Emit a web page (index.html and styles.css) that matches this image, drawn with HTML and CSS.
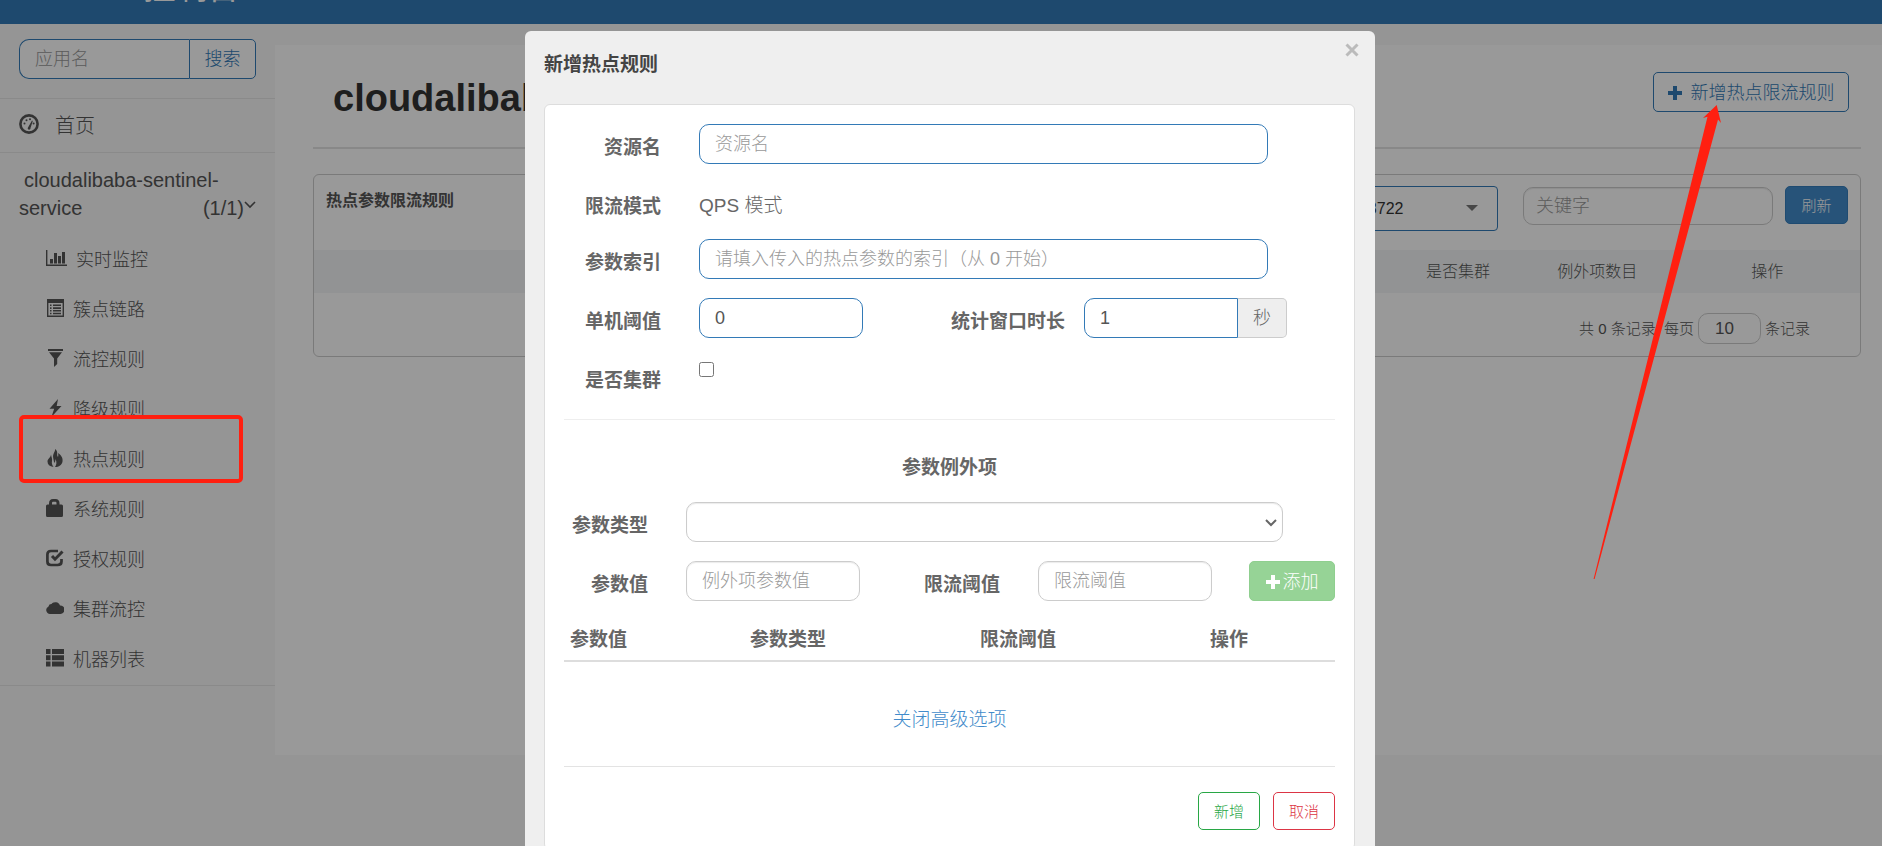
FILE: index.html
```html
<!DOCTYPE html>
<html lang="zh-CN">
<head>
<meta charset="utf-8">
<title>Sentinel 控制台</title>
<link rel="stylesheet" href="styles.css">
</head>
<body>
<header class="topbar"><a class="brand" href="#">Sentinel 控制台</a></header>
<div class="layout">
  <nav class="sidebar">
    <form class="search">
      <input class="search-input" type="text" placeholder="应用名" aria-label="应用名">
      <button class="search-btn" type="button">搜索</button>
    </form>
    <a class="home" href="#">
      <svg class="home-icon" viewBox="0 0 20 20"><circle cx="10" cy="10" r="8.6" fill="none" stroke="currentColor" stroke-width="2.6"/><path d="M9 13.5 13 6.5l.8.4-2.3 7.2a1.4 1.4 0 1 1-2.5-.6z" fill="currentColor"/><circle cx="5.5" cy="9.5" r="1" fill="currentColor"/><circle cx="7.5" cy="6.3" r="1" fill="currentColor"/><circle cx="11" cy="5.2" r="1" fill="currentColor"/><circle cx="14.6" cy="9.5" r="1" fill="currentColor"/></svg>
      <span>首页</span>
    </a>
    <a class="app" href="#">cloudalibaba-sentinel-service
      <span class="app-count">(1/1)<svg class="app-caret" viewBox="0 0 12 8"><path d="M1 1l5 5 5-5" fill="none" stroke="currentColor" stroke-width="1.6"/></svg></span>
    </a>
    <ul class="menu">
      <li><a href="#"><svg class="mi wide" viewBox="0 0 21 18"><path d="M0 1h1.4v14.6H21V17H0zM4 10h3v4.500H4zM8 4h3v10.500H8zM12 7h3v7.500h-3zM16 3h3v11.500h-3z" fill="currentColor"/></svg>实时监控</a></li>
      <li><a href="#"><svg class="mi" viewBox="0 0 18 18"><path d="M1 0h17v18H1zM2.400 4v12.600h14.200V4z" fill="currentColor" fill-rule="evenodd"/><path d="M4 5.500h1.500v1.600H4zm3 0h8v1.600H7zM4 8.300h1.500v1.600H4zm3 0h8v1.600H7zM4 11h1.500v1.600H4zm3 0h8v1.600H7zM4 13.700h1.500v1.600H4zm3 0h8v1.600H7z" fill="currentColor"/></svg>簇点链路</a></li>
      <li><a href="#"><svg class="mi" viewBox="0 0 18 18"><path d="M2 0h15v2H2zM3 3.200h13l-4.800 6.300V15L8 18V9.500z" fill="currentColor"/></svg>流控规则</a></li>
      <li><a href="#"><svg class="mi" viewBox="0 0 18 18"><path d="M12 0 3.500 9.800h4.700L5.400 18 15.500 7h-4.800z" fill="currentColor"/></svg>降级规则</a></li>
      <li><a href="#"><svg class="mi" viewBox="-1 0 18 18"><path d="M8 0C12 3 9 5.500 11 8 11.500 6.500 11.300 5 11 4 15 6.500 16 10 15.500 12.500 15 16 12 18 8 18 9.500 16 10 13 8.500 10 8.500 12 8 13 7.200 14 6.500 9 5.500 8 6.500 5 7 3 8.500 2 8 0zM4 5.500C4.300 8 5.500 9.500 5 12 4.500 14 5 16 6.500 18 2.500 17.500.5 15.500.5 12.500.5 9.500 3.500 9 4 5.500z" fill="currentColor"/></svg>热点规则</a></li>
      <li><a href="#"><svg class="mi" viewBox="0 0 18 18"><path d="M0 7q0-1.500 1.500-1.500H3V4.500Q3 0 7 0h2.500q4 0 4 4.500v1h2Q17 5.500 17 7v9.500Q17 18 15.500 18h-14Q0 18 0 16.500zM6 5.500h4.500V4q0-1.200-1-1.200H7Q6 2.800 6 4z" fill="currentColor" fill-rule="evenodd"/></svg>系统规则</a></li>
      <li><a href="#"><svg class="mi" viewBox="0 0 18 18"><path d="M12 2H5Q1.400 2 1.400 5.500v7Q1.400 16 5 16h6.500q4 0 4-3.500V10" fill="none" stroke="currentColor" stroke-width="2.700"/><path d="M6 7l3 3.200L16.500 2.500" fill="none" stroke="currentColor" stroke-width="3"/></svg>授权规则</a></li>
      <li><a href="#"><svg class="mi" viewBox="0 0 18 18"><path d="M4 15a4 4 0 0 1-1.500-7.600A3 3 0 0 1 5.500 5 5 5 0 0 1 14 6.400 4.300 4.300 0 0 1 14.500 15z" fill="currentColor"/></svg>集群流控</a></li>
      <li><a href="#"><svg class="mi" viewBox="0 0 18 18"><path d="M0 0h4.500v5H0zm6 0h12v5H6zM0 6.200h4.500v5H0zm6 0h12v5H6zM0 12.400h4.500v5H0zm6 0h12v5H6z" fill="currentColor"/></svg>机器列表</a></li>
    </ul>
  </nav>
  <main class="content">
    <div class="page-head">
      <h1>cloudalibaba-sentinel-service</h1>
      <button class="new-rule" type="button"><svg class="plus" viewBox="0 0 14 14"><path d="M5 0h4v5h5v4H9v5H5V9H0V5h5z" fill="currentColor"/></svg>新增热点限流规则</button>
    </div>
    <section class="card">
      <div class="card-head">
        <h2>热点参数限流规则</h2>
        <div class="filters">
          <div class="pick machine-pick">
            <select class="machine" aria-label="机器"><option>192.168.10.1:8722</option></select>
            <svg class="machine-caret" viewBox="0 0 12 6"><path d="M0 0h12L6 6z" fill="currentColor"/></svg>
          </div>
          <input class="keyword" type="text" placeholder="关键字" aria-label="关键字">
          <button class="refresh" type="button">刷新</button>
        </div>
      </div>
      <table class="rules">
        <colgroup><col class="c33"><col class="c12"><col class="c13"><col class="c12"><col class="c8"><col class="c10"><col class="c12"></colgroup>
        <thead><tr><th>资源名</th><th>参数索引</th><th>流控模式</th><th>阈值</th><th>是否集群</th><th>例外项数目</th><th>操作</th></tr></thead>
      </table>
      <div class="pager"><span>共 0 条记录, 每页</span><input class="page-size" type="text" value="10" aria-label="每页条数"><span>条记录</span></div>
    </section>
  </main>
</div>

<div class="backdrop">
  <div class="modal" role="dialog" aria-labelledby="dlg-title">
    <button class="close" type="button" aria-label="关闭"><svg viewBox="0 0 14 14"><path d="M1.500 1.500l11 11m0-11l-11 11" stroke="currentColor" stroke-width="3"/></svg></button>
    <h2 class="modal-title" id="dlg-title">新增热点规则</h2>
    <form class="panel">
      <div class="row main-row"><label for="res">资源名</label><input class="field blue grow" id="res" type="text" placeholder="资源名"></div>
      <div class="row main-row"><span class="label">限流模式</span><p class="static">QPS 模式</p></div>
      <div class="row main-row"><label for="idx">参数索引</label><input class="field blue grow" id="idx" type="text" placeholder="请填入传入的热点参数的索引（从 0 开始）"></div>
      <div class="row split-row"><label for="cnt">单机阈值</label><input class="field blue count" id="cnt" type="text" value="0"><label class="window-label" for="win">统计窗口时长</label><div class="group"><input class="field blue" id="win" type="text" value="1"><span class="addon">秒</span></div></div>
      <div class="row main-row"><label for="cluster">是否集群</label><input class="check" id="cluster" type="checkbox"></div>
      <hr>
      <h3 class="sub-title">参数例外项</h3>
      <div class="row type-row"><label for="ptype">参数类型</label><div class="pick grow"><select class="field type" id="ptype"><option></option></select><svg class="type-caret" viewBox="0 0 12 8"><path d="M1 1l5 5 5-5" fill="none" stroke="currentColor" stroke-width="2"/></svg></div></div>
      <div class="row item-row"><label for="pval">参数值</label><input class="field short" id="pval" type="text" placeholder="例外项参数值"><label class="limit-label" for="plim">限流阈值</label><input class="field short" id="plim" type="text" placeholder="限流阈值"><button class="add" type="button" disabled><svg class="plus" viewBox="0 0 14 14"><path d="M5 0h4v5h5v4H9v5H5V9H0V5h5z" fill="currentColor"/></svg>添加</button></div>
      <table class="items">
        <colgroup><col class="i1"><col class="i2"><col class="i3"><col class="i4"></colgroup>
        <thead><tr><th>参数值</th><th>参数类型</th><th>限流阈值</th><th>操作</th></tr></thead>
      </table>
      <a class="advanced" href="#">关闭高级选项</a>
      <hr>
      <div class="actions"><button class="ok" type="button">新增</button><button class="cancel" type="button">取消</button></div>
    </form>
  </div>
</div>

<div class="mark-box"></div>
<svg class="mark-arrow" viewBox="0 0 130 480"><path d="M124.700 1 111 14l4.500-1.200L1.600 475h1L126 15.500l3 3.500z" fill="#ff1f10"/></svg>
</body>
</html>
```
FILE: styles.css
```css
* { box-sizing: border-box; }
body {
  margin: 0;
  min-height: 100vh;
  overflow: hidden;
  background: #f8f8f8;
  color: #555;
  font: 300 18px/28px "Liberation Sans", "Noto Sans CJK SC", sans-serif;
}
a { color: inherit; text-decoration: none; }
h1, h2, h3, p, ul { margin: 0; padding: 0; }
input, button, select { font: inherit; color: inherit; margin: 0; }
input::placeholder { color: #999; opacity: 1; }
button { padding: 0; }

.topbar {
  display: flex;
  align-items: flex-end;
  height: 24px;
  padding: 0 19px 16px;
  overflow: hidden;
  background: #337ab7;
}
.brand { color: #fff; font-size: 32px; font-weight: 400; line-height: 40px; }

.layout { display: flex; align-items: flex-start; }

.sidebar { flex: none; width: 275px; color: #555; }
.search { display: flex; padding: 15px 19px 19px; border-bottom: 1px solid #e7e7e7; }
.search-input {
  flex: 1;
  min-width: 0;
  height: 40px;
  padding: 0 15px;
  border: 1px solid #337ab7;
  border-right: 0;
  border-radius: 10px 0 0 10px;
  background: #fff;
}
.search-btn {
  width: 67px;
  height: 40px;
  border: 1px solid #337ab7;
  border-radius: 0 5px 5px 0;
  background: #fff;
  color: #337ab7;
}
.home {
  display: flex;
  align-items: center;
  gap: 16px;
  height: 54px;
  padding: 0 19px;
  border-bottom: 1px solid #e7e7e7;
  font-size: 20px;
}
.home-icon { width: 20px; height: 20px; margin-bottom: 4px; }
.app {
  display: block;
  padding: 13px 19px;
  font-size: 20px;
  text-indent: 5px;
}
.app-count { float: right; text-indent: 0; }
.app-caret { width: 12px; height: 8px; margin-bottom: 6px; }
.menu { list-style: none; border-bottom: 1px solid #e7e7e7; }
.menu a { display: flex; align-items: center; gap: 9px; height: 50px; padding-left: 46px; }
.mi { width: 18px; height: 18px; margin-bottom: 4px; }
.mi.wide { width: 21px; }

.content {
  flex: 1;
  min-width: 0;
  min-height: 710px;
  margin-top: 21px;
  padding: 0 21px 0 38px;
  background: #fff;
}
.page-head {
  display: flex;
  justify-content: space-between;
  align-items: flex-start;
  padding: 27px 12px 35px 20px;
  border-bottom: 2px solid #e3e3e3;
}
.page-head h1 { height: 40px; color: #333; font-size: 38px; font-weight: 700; line-height: 52px; }
.new-rule {
  display: flex;
  align-items: center;
  justify-content: center;
  gap: 9px;
  width: 196px;
  height: 40px;
  padding-top: 1px;
  border: 1px solid #337ab7;
  border-radius: 5px;
  background: #fff;
  color: #337ab7;
}
.plus { flex: none; width: 14px; height: 14px; }

.card { margin-top: 25px; border: 1px solid #ccc; border-radius: 6px; }
.card-head { display: flex; justify-content: space-between; padding: 11px 12px 19px; }
.card-head h2 { padding-top: 1px; font-size: 16px; font-weight: 700; }
.filters { display: flex; align-items: flex-start; }
.pick { position: relative; display: flex; }
.machine-pick { width: 270px; margin-right: 25px; }
.machine {
  appearance: none;
  flex: 1;
  height: 45px;
  padding: 0 41px;
  border: 1px solid #337ab7;
  border-radius: 4px;
  background: #fff;
  color: #333;
  font-size: 16px;
}
.machine-caret { position: absolute; top: 19px; right: 20px; width: 12px; height: 6px; color: #777; }
.keyword {
  width: 250px;
  height: 38px;
  margin: 1px 12px 0 0;
  padding: 0 12px;
  border: 1px solid #ccc;
  border-radius: 10px;
  background: #fff;
  box-shadow: inset 0 1px 1px rgba(0, 0, 0, .08);
}
.refresh {
  width: 63px;
  height: 38px;
  padding-top: 1px;
  border: 1px solid #357ebd;
  border-radius: 5px;
  background: #428bca;
  color: #fff;
  font-size: 15px;
}
.rules { width: 100%; table-layout: fixed; border-collapse: collapse; background: #f3f5f7; }
.rules th { height: 43px; padding: 1px 0 0; font-size: 16px; font-weight: 300; }
.c33 { width: 33%; } .c12 { width: 12%; } .c13 { width: 13%; } .c8 { width: 8%; } .c10 { width: 10%; }
.pager {
  display: flex;
  justify-content: flex-end;
  align-items: center;
  gap: 4px;
  padding: 20px 50px 12px 0;
  font-size: 15px;
}
.page-size {
  width: 63px;
  height: 31px;
  padding: 0 16px;
  border: 1px solid #ccc;
  border-radius: 10px;
  background: #fff;
  font-size: 17px;
}

.backdrop {
  position: fixed;
  inset: 0;
  display: flex;
  justify-content: center;
  align-items: flex-start;
  padding: 31px 0 0 18px;
  overflow: hidden;
  background: rgba(0, 0, 0, .4);
}
.modal {
  position: relative;
  width: 850px;
  padding: 20px 20px 40px 19px;
  border-radius: 6px;
  background: #efefef;
}
.close {
  position: absolute;
  top: 12px;
  right: 16px;
  width: 14px;
  height: 14px;
  border: 0;
  background: none;
  color: #bbb;
}
.close svg { display: block; }
.modal-title { margin-bottom: 25px; color: #444; font-size: 19px; font-weight: 700; }
.panel {
  padding: 19px;
  border: 1px solid #ddd;
  border-radius: 6px;
  background: #fff;
  color: #666;
}
.row { display: flex; align-items: flex-start; height: 40px; margin-bottom: 19px; }
.row label, .label {
  flex: none;
  width: 97px;
  margin-right: 38px;
  padding-top: 10px;
  font-size: 19px;
  font-weight: 700;
  text-align: right;
}
.main-row { padding-right: 67px; }
.main-row:has(.static), .main-row:has(.check) { height: 37px; }
.split-row { padding-right: 48px; }
.static { padding-top: 9px; font-size: 19px; }
.field {
  min-width: 0;
  height: 40px;
  padding: 0 15px;
  border: 1px solid #ccc;
  border-radius: 10px;
  background: #fff;
  box-shadow: inset 0 1px 1px rgba(0, 0, 0, .08);
  color: #555;
}
.blue { border-color: #337ab7; box-shadow: none; }
.grow { flex: 1; }
.count { width: 164px; }
.row .window-label { width: auto; margin: 0 19px 0 auto; }
.group { display: flex; width: 203px; }
.group .field { flex: 1; border-radius: 10px 0 0 10px; }
.addon {
  width: 49px;
  height: 40px;
  padding-top: 5px;
  border: 1px solid #ccc;
  border-left: 0;
  border-radius: 0 5px 5px 0;
  background: #eee;
  text-align: center;
}
.check { width: 15px; height: 15px; margin-top: 5px; }
hr { margin: 25px 0 34px; border: 0; border-top: 1px solid #eee; }
.sub-title { margin-bottom: 20px; font-size: 19px; font-weight: 700; text-align: center; }
.type-row label, .item-row label { width: 84px; }
.type-row { padding-right: 52px; }
.type { appearance: none; flex: 1; }
.type-caret { position: absolute; top: 17px; right: 6px; width: 12px; height: 8px; }
.short { width: 174px; }
.row .limit-label { width: auto; margin-left: auto; }
.add {
  display: flex;
  align-items: center;
  justify-content: center;
  gap: 3px;
  width: 86px;
  height: 40px;
  margin-left: 37px;
  padding-top: 1px;
  border: 1px solid #8fcf8f;
  border-radius: 5px;
  background: #96d396;
  color: #fff;
}
.items { width: 100%; table-layout: fixed; border-collapse: collapse; border-bottom: 2px solid #ddd; }
.items th { padding: 6px 6px; font-size: 19px; text-align: left; }
.i1 { width: 180px; } .i2, .i3 { width: 230px; }
.advanced { display: block; margin: 44px 0 32px; color: #428bca; font-size: 19px; text-align: center; }
.advanced + hr { margin: 0 0 25px; border-color: #e3e3e3; }
.actions { display: flex; justify-content: flex-end; gap: 13px; }
.ok, .cancel { width: 62px; height: 38px; padding-top: 1px; border: 1px solid; border-radius: 5px; background: #fff; font-size: 15px; }
.ok { color: #28a745; }
.cancel { color: #dc3545; }

.mark-box {
  position: absolute;
  top: 415px;
  left: 19px;
  width: 224px;
  height: 68px;
  border: 4px solid #ff1f10;
  border-radius: 5px;
}
.mark-arrow { position: absolute; top: 104px; right: 160px; width: 130px; height: 480px; }
```
